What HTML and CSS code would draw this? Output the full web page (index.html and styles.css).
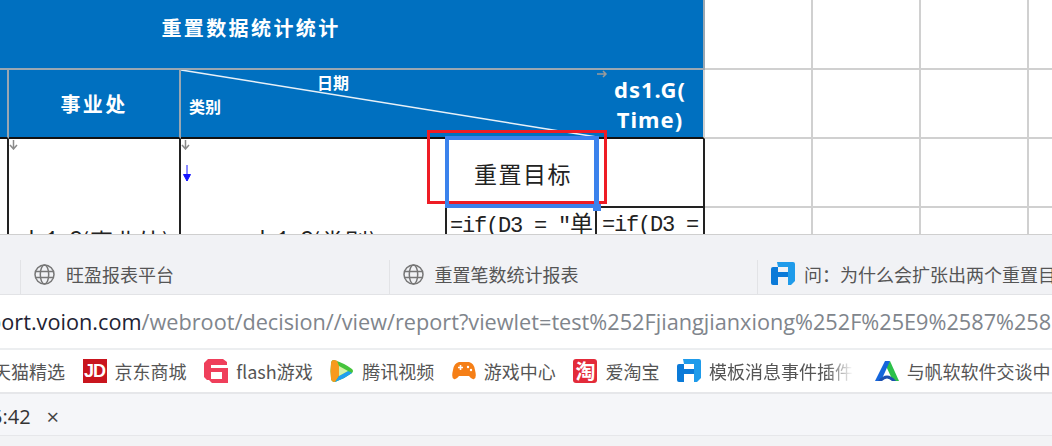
FILE: index.html
```html
<!DOCTYPE html>
<html lang="zh-CN">
<head>
    <meta charset="UTF-8">
    <title>重置数据统计统计</title>
    <link rel="stylesheet" href="styles.css">
</head>
<body>
    <div class="sheet">
        <div class="cell head title">重置数据统计统计</div>
        <div class="cell"></div><div class="cell"></div><div class="cell"></div><div class="cell"></div>

        <div class="cell head edge"></div>
        <div class="cell head unit">事业处</div>
        <div class="cell head slant">
            <svg class="slant-line" viewBox="0 0 416 69" preserveAspectRatio="none"><line x1="0" y1="0" x2="416" y2="69" stroke="#e8f1f8" stroke-width="1.6"/></svg>
            <span class="slant-top">日期</span>
            <span class="slant-low">类别</span>
        </div>
        <div class="cell head time">
            <svg class="mark-right" width="11" height="8" viewBox="0 0 11 8"><path d="M0 4h8M6 1l3 3-3 3" fill="none" stroke="#9a9a9a" stroke-width="1.5"/></svg>
            ds1.G(<br>Time)
        </div>
        <div class="cell"></div><div class="cell"></div><div class="cell"></div><div class="cell"></div>

        <div class="cell body tall edge-body"><svg class="mark-down" width="9" height="10" viewBox="0 0 9 10"><path d="M4.500 0v8M1 5l3.500 4L8 5" fill="none" stroke="#8a8a8a" stroke-width="1.5"/></svg></div>
        <div class="cell body tall span-text"><svg class="mark-down" width="9" height="10" viewBox="0 0 9 10"><path d="M4.500 0v8M1 5l3.500 4L8 5" fill="none" stroke="#8a8a8a" stroke-width="1.5"/></svg>ds1.G<span class="cn">(事业处)</span></div>
        <div class="cell body tall span-text">
            <svg class="mark-down" width="9" height="10" viewBox="0 0 9 10"><path d="M4.500 0v8M1 5l3.500 4L8 5" fill="none" stroke="#8a8a8a" stroke-width="1.5"/></svg>
            <svg class="mark-blue" width="8" height="17" viewBox="0 0 8 17"><path d="M4 0v16M0.500 9.500h7L4 16z" fill="#1414ff" stroke="#1414ff"/></svg>
            ds1.G<span class="cn">(类别)</span>
        </div>
        <div class="cell body target">重置目标</div>
        <div class="cell body"></div>
        <div class="cell"></div><div class="cell"></div><div class="cell"></div><div class="cell"></div>

        <div class="cell body formula">=if(D3 = "<span class="cn">单</span></div>
        <div class="cell body formula">=if(D3 = </div>
        <div class="cell"></div><div class="cell"></div><div class="cell"></div><div class="cell"></div>

        <div class="red-box"></div>
        <div class="selection"><i class="handle"></i></div>
    </div>

    <div class="tabs">
        <div class="tab">
            <svg class="globe" viewBox="0 0 21 21"><g fill="none" stroke="#777" stroke-width="1.500"><circle cx="10.500" cy="10.500" r="9.500"/><ellipse cx="10.500" cy="10.500" rx="4.200" ry="9.500"/><path d="M1.500 7.500h18M1.500 13.500h18"/></g></svg>
            <span>旺盈报表平台</span>
        </div>
        <div class="tab">
            <svg class="globe" viewBox="0 0 21 21"><g fill="none" stroke="#777" stroke-width="1.500"><circle cx="10.500" cy="10.500" r="9.500"/><ellipse cx="10.500" cy="10.500" rx="4.200" ry="9.500"/><path d="M1.500 7.500h18M1.500 13.500h18"/></g></svg>
            <span>重置笔数统计报表</span>
        </div>
        <div class="tab tab-fine">
            <svg class="ico" viewBox="0 0 24 24"><path d="M6 0H22q2 0 2 2V19l-4 4h-3V5H7z" fill="#1f9bea"/><path d="M0 7Q0 5 2 5H7V10H17V15H7V23H2Q0 23 0 21z" fill="#0b7ad8"/></svg>
            <span>问：为什么会扩张出两个重置目标</span>
        </div>
    </div>

    <div class="address"><span class="host">port.voion.com</span><span class="path">/webroot/decision//view/report?viewlet=test%252Fjiangjianxiong%252F%25E9%2587%258D%25E7%25BD%25AE</span></div>

    <div class="bookmarks">
        <div class="mark"><span>天猫精选</span></div>
        <div class="mark"><b class="jd">JD</b><span>京东商城</span></div>
        <div class="mark">
            <svg class="ico" viewBox="0 0 24 24"><path fill-rule="evenodd" d="M4 0H19l4 3v3H7V9H24V24H8L5 21H3L0 18V4zM7 13H18V20H7z" fill="#ef3f5b"/></svg>
            <span>flash游戏</span>
        </div>
        <div class="mark">
            <svg class="ico" viewBox="0 0 24 24"><path d="M4 1Q1 1 1 5 0 12 1 19Q1 23 5 23 14 20 22 14Q24 12 22 10 14 4 4 1z" fill="#45c43c"/><path d="M4 1Q1 1 1 5 0 12 1 19Q1 23 5 23L9 17V7L7 1.800z" fill="#f79a1e"/><path d="M5 23Q14 20 22 14L18 12 9 17z" fill="#1f9ff0"/><path d="M9 7l9 5-9 5z" fill="#d4f2a8"/></svg>
            <span>腾讯视频</span>
        </div>
        <div class="mark">
            <svg class="ico" viewBox="0 0 24 24"><path d="M7 3h10q5 1 6 8 2 8-1 9-2 1-5-3H7q-3 4-5 3-3-1-1-9 1-7 6-8z" fill="#f57f17"/><path d="M6 8.500h5M8.500 6v5" stroke="#fff" stroke-width="1.600"/><circle cx="16" cy="8" r="1.200" fill="#fff"/><circle cx="19" cy="11" r="1.200" fill="#fff"/></svg>
            <span>游戏中心</span>
        </div>
        <div class="mark"><b class="taobao">淘</b><span>爱淘宝</span></div>
        <div class="mark">
            <svg class="ico" viewBox="0 0 24 24"><path d="M6 0H22q2 0 2 2V19l-4 4h-3V5H7z" fill="#1f9bea"/><path d="M0 7Q0 5 2 5H7V10H17V15H7V23H2Q0 23 0 21z" fill="#0b7ad8"/></svg>
            <span class="fade">模板消息事件插件</span>
        </div>
        <div class="mark">
            <svg class="ico" viewBox="0 0 24 24"><path d="M15 2l9 20h-6l-7-15z" fill="#2cc04a"/><path d="M10 2h5L6 22H0z" fill="#1566dc"/><path d="M3 22Q12 11 21 22H17Q12 17 7 22z" fill="#1c4fb0"/></svg>
            <span>与帆软软件交谈中</span>
        </div>
    </div>

    <div class="download"><span class="clock">5:42</span><span class="close">×</span></div>
    <div class="bottom"></div>
</body>
</html>
```

FILE: styles.css
```css
html, body {
    margin: 0;
    padding: 0;
    height: 446px;
    overflow: hidden;
    background: #f2f3f5;
    font-family: "Noto Sans CJK SC", sans-serif;
}

/* sheet */
.sheet {
    position: relative;
    height: 234px;
    margin-left: -201px;
    display: grid;
    grid-template-columns: 210px 172px 266px 150px 108px 108px 108px 108px 60px;
    grid-template-rows: 70px 69px 69px 133px;
    overflow: hidden;
    background: #fff;
}
.cell {
    box-sizing: border-box;
    min-width: 0;
    border-right: 2px solid #d0d0d0;
    border-bottom: 2px solid #d0d0d0;
}
.head {
    background: #0070c0;
    color: #fff;
    font-weight: 700;
    font-size: 20px;
    letter-spacing: 2.4px;
    display: flex;
    align-items: center;
    justify-content: center;
    border-color: #9aa7b2;
}
.title {
    grid-column: 1 / span 5;
    padding-bottom: 14px;
}
.edge, .unit, .slant, .time {
    border-bottom-color: #111;
}
.time {
    position: relative;
    border-right-color: #d0d0d0;
    text-align: center;
    font-family: "Noto Sans", sans-serif;
    font-size: 22px;
    letter-spacing: 1px;
    line-height: 30px;
}
.mark-right {
    position: absolute;
    left: 0;
    top: 0;
}
.slant {
    grid-column: span 2;
    position: relative;
    display: block;
    font-size: 16px;
    letter-spacing: 0;
    border-right: 0;
}
.slant-line {
    position: absolute;
    left: 0;
    top: 0;
    width: 100%;
    height: 100%;
}
.slant-top {
    position: absolute;
    left: 136px;
    top: 0;
}
.slant-low {
    position: absolute;
    left: 8px;
    top: 24px;
}
.body {
    position: relative;
    border-color: #222;
    color: #222;
    font-family: "Liberation Mono", monospace;
    font-size: 22px;
    letter-spacing: -1.2px;
    white-space: nowrap;
    overflow: hidden;
}
.cn {
    font-family: "Noto Sans CJK SC", sans-serif;
    font-size: 23px;
    letter-spacing: 1px;
}
.tall {
    grid-row: span 2;
}
.span-text {
    display: flex;
    align-items: center;
    justify-content: center;
    padding: 2px 0 0 4px;
}
.mark-down {
    position: absolute;
    left: 0;
    top: 1px;
}
.mark-blue {
    position: absolute;
    left: 2px;
    top: 26px;
}
.target {
    display: flex;
    align-items: center;
    justify-content: center;
    padding-left: 4px;
    font-family: "Noto Sans CJK SC", sans-serif;
    font-size: 23px;
    letter-spacing: 1.5px;
}
.formula {
    padding: 1px 0 0 3px;
    line-height: 26px;
    border-right-color: #222;
}
.formula + .formula {
    padding: 5px 0 0 5px;
}
.red-box {
    position: absolute;
    left: 628px;
    top: 130px;
    width: 174px;
    height: 68px;
    border: 3px solid #ee1c25;
}
.selection {
    position: absolute;
    left: 646px;
    top: 136px;
    width: 145px;
    height: 64px;
    border: solid #3b82ec;
    border-width: 4px 5px 4px 4px;
}
.handle {
    position: absolute;
    right: -7px;
    bottom: -7px;
    width: 8px;
    height: 7px;
    background: #3b82ec;
}

/* browser tabs */
.tabs {
    box-sizing: border-box;
    height: 61px;
    padding: 25px 0 0 20px;
    display: flex;
    background: #f1f2f5;
    border-top: 1px solid #cfcfcf;
    border-bottom: 1px solid #e2e3e6;
}
.tab {
    flex: 0 0 368.5px;
    display: flex;
    align-items: center;
    gap: 11px;
    padding: 0 0 6px 13px;
    box-sizing: border-box;
    border-left: 1px solid #e2e3e6;
    color: #555;
    font-size: 18px;
    white-space: nowrap;
    overflow: hidden;
}
.tab-fine {
    gap: 9px;
}
.globe {
    width: 21px;
    height: 21px;
    flex: none;
}
.ico {
    width: 24px;
    height: 24px;
    flex: none;
}

/* address bar */
.address {
    box-sizing: border-box;
    height: 55px;
    background: #fff;
    border-bottom: 2px solid #eceef0;
    font-family: "Open Sans", sans-serif;
    font-size: 21.7px;
    line-height: 54px;
    white-space: nowrap;
    overflow: hidden;
    text-indent: -12px;
}
.host {
    color: #223;
}
.path {
    color: #80858c;
}

/* bookmarks */
.bookmarks {
    box-sizing: border-box;
    height: 44px;
    margin-left: -7px;
    display: flex;
    align-items: center;
    gap: 17.6px;
    background: #fff;
    border-bottom: 2px solid #e6e7ea;
    color: #555;
    font-size: 18px;
    white-space: nowrap;
}
.mark {
    display: flex;
    align-items: center;
    gap: 8px;
    flex: none;
}
.mark:last-child {
    margin-left: 4px;
}
.jd, .taobao {
    width: 24px;
    height: 24px;
    flex: none;
    display: block;
    text-align: center;
    color: #fff;
    line-height: 24px;
}
.jd {
    background: #c9151e;
    font-family: "Liberation Sans", sans-serif;
    font-size: 18px;
    letter-spacing: -1px;
}
.taobao {
    background: #e32b3a;
    border-radius: 3px;
    font-size: 20px;
}
.fade {
    -webkit-mask-image: linear-gradient(90deg, #000 82%, transparent 100%);
    mask-image: linear-gradient(90deg, #000 82%, transparent 100%);
}

/* download bar */
.download {
    box-sizing: border-box;
    height: 42px;
    padding-top: 3px;
    display: flex;
    align-items: center;
    gap: 16px;
    background: #f5f6f9;
    border-bottom: 1px solid #e6e7ea;
    margin-left: -9px;
    color: #333;
    font-family: "Open Sans", sans-serif;
    font-size: 20px;
}
.close {
    font-size: 22px;
    color: #444;
}
.bottom {
    height: 11px;
    background: #f2f3f5;
}
```
